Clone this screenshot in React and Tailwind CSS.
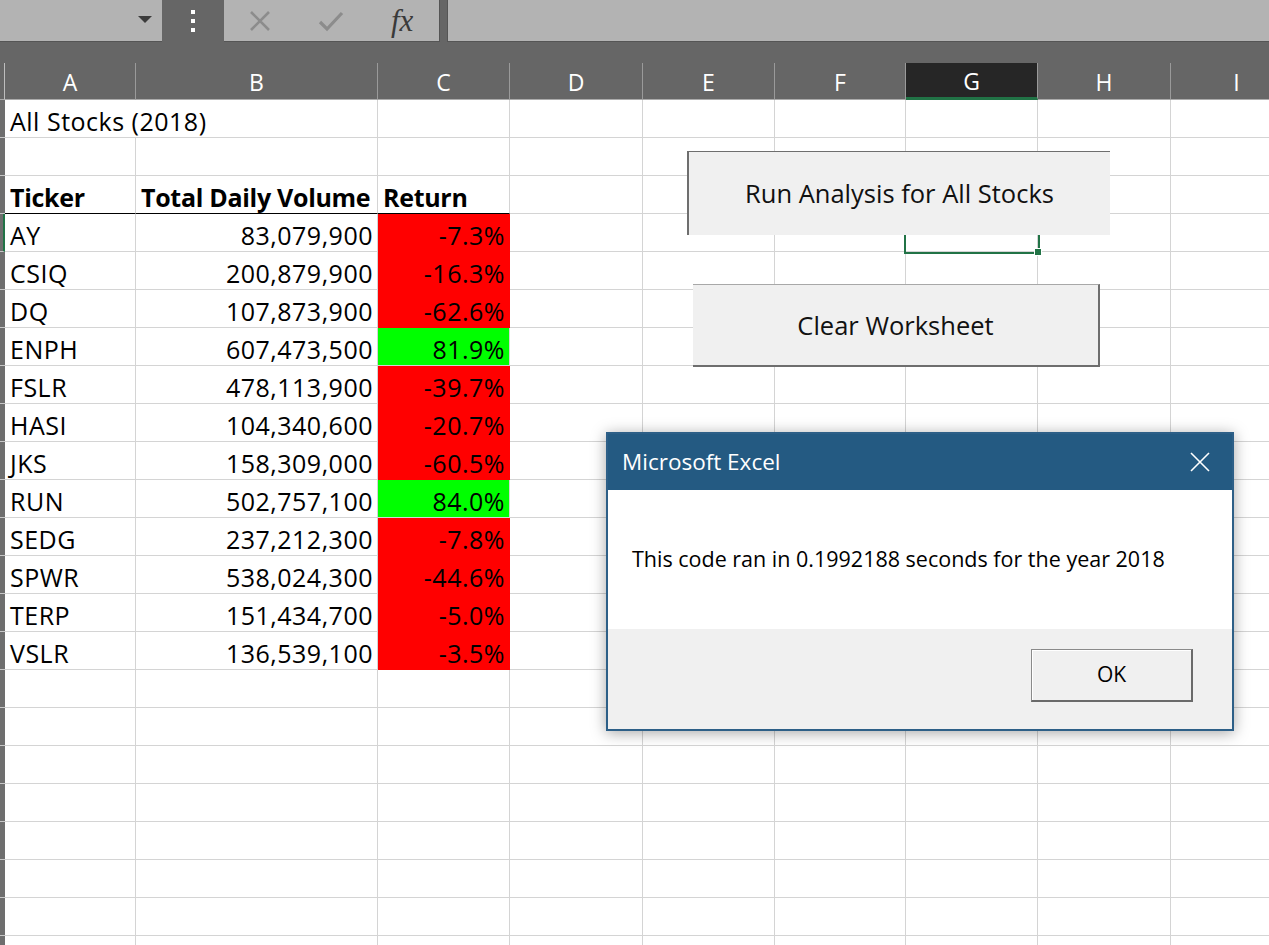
import React from "react";

const cols = [
  { key: "A", w: 131 },
  { key: "B", w: 242 },
  { key: "C", w: 132 },
  { key: "D", w: 133 },
  { key: "E", w: 132 },
  { key: "F", w: 131 },
  { key: "G", w: 132 },
  { key: "H", w: 133 },
  { key: "I", w: 132 },
];

const stocks = [
  ["AY", "83,079,900", "-7.3%", false],
  ["CSIQ", "200,879,900", "-16.3%", false],
  ["DQ", "107,873,900", "-62.6%", false],
  ["ENPH", "607,473,500", "81.9%", true],
  ["FSLR", "478,113,900", "-39.7%", false],
  ["HASI", "104,340,600", "-20.7%", false],
  ["JKS", "158,309,000", "-60.5%", false],
  ["RUN", "502,757,100", "84.0%", true],
  ["SEDG", "237,212,300", "-7.8%", false],
  ["SPWR", "538,024,300", "-44.6%", false],
  ["TERP", "151,434,700", "-5.0%", false],
  ["VSLR", "136,539,100", "-3.5%", false],
];

const cellFont = { fontFamily: "'Open Sans', 'Noto Sans', sans-serif" };

function Cell({ w, children, className = "", noRight }) {
  return (
    <div
      style={{ width: w }}
      className={`h-full shrink-0 flex items-end pb-[4px] leading-[24px] overflow-visible whitespace-nowrap border-b border-[#d4d4d4] ${
        noRight ? "" : "border-r"
      } ${className}`}
    >
      {children}
    </div>
  );
}

function Row({ children, active }) {
  return (
    <div className="flex h-[38px] text-[25px] text-black tracking-[0.5px]" style={cellFont}>
      <div
        className={`w-[5px] shrink-0 h-full bg-[#6e6e6e] border-b border-[#c8c8c8] ${
          active ? "border-r-2 border-r-[#217346]" : ""
        }`}
      />
      {children}
    </div>
  );
}

function EmptyCells({ from = 0 }) {
  return cols.slice(from).map((c) => <Cell key={c.key} w={c.w} />);
}

export default function App() {
  return (
    <div className="relative w-[1269px] h-[945px] overflow-hidden bg-white select-none">
      {/* toolbar */}
      <div className="flex h-[42px] bg-[#666666]">
        <div className="w-[162px] h-full bg-[#b3b3b3] border-b border-[#555] relative">
          <div className="absolute left-[138px] top-[16px] w-0 h-0 border-l-[7px] border-r-[7px] border-t-[7px] border-l-transparent border-r-transparent border-t-[#3c3c3c]" />
        </div>
        <div className="w-[62px] h-full flex flex-col items-center justify-center gap-[5px]">
          <div className="w-[4px] h-[4px] bg-white" />
          <div className="w-[4px] h-[4px] bg-white" />
          <div className="w-[4px] h-[4px] bg-white" />
        </div>
        <div className="w-[216px] h-full bg-[#b3b3b3] border-b border-r border-[#555] flex items-center">
          <svg width="24" height="24" viewBox="0 0 24 24" className="ml-[24px]">
            <path d="M3 3 L21 21 M21 3 L3 21" stroke="#8c8c8c" strokeWidth="2.6" />
          </svg>
          <svg width="28" height="24" viewBox="0 0 28 24" className="ml-[45px]">
            <path d="M3 13 L10 20 L25 4" stroke="#8c8c8c" strokeWidth="3.2" fill="none" />
          </svg>
          <span
            className="ml-[46px] text-[31px] italic text-[#3a3a3a] leading-none"
            style={{ fontFamily: "'Liberation Serif', serif" }}
          >
            fx
          </span>
        </div>
        <div className="w-[7px]" />
        <div className="flex-1 h-full bg-[#b3b3b3] border-b border-l border-[#555]" />
      </div>
      <div className="h-[21px] bg-[#666666]" />

      {/* column headers */}
      <div
        className="flex h-[37px] bg-[#666666] text-[23px] text-white"
        style={{ fontFamily: "'Open Sans', 'Noto Sans', sans-serif" }}
      >
        <div className="w-[5px] shrink-0 h-full border-r border-[#bdbdbd] border-b border-b-[#ababab]" />
        {cols.map((c) => (
          <div
            key={c.key}
            style={{ width: c.w }}
            className={`shrink-0 h-full flex items-center justify-center pt-[2px] border-r border-[#9a9a9a] ${
              c.key === "G"
                ? "bg-[#262626] border-b-[3px] border-b-[#217346]"
                : "border-b border-b-[#ababab]"
            }`}
          >
            {c.key}
          </div>
        ))}
      </div>

      {/* sheet */}
      <div>
        <Row>
          <Cell w={131} noRight>
            <span className="pl-[5px]">All Stocks (2018)</span>
          </Cell>
          <Cell w={242} />
          <EmptyCells from={2} />
        </Row>
        <Row>
          <EmptyCells />
        </Row>
        <Row>
          <Cell w={131} className="border-b-black font-bold tracking-[-0.3px]">
            <span className="pl-[5px]">Ticker</span>
          </Cell>
          <Cell w={242} className="border-b-black font-bold tracking-[-0.3px]">
            <span className="pl-[5px]">Total Daily Volume</span>
          </Cell>
          <Cell w={132} className="border-b-black font-bold tracking-[-0.3px]">
            <span className="pl-[5px]">Return</span>
          </Cell>
          <EmptyCells from={3} />
        </Row>
        {stocks.map(([t, v, r, up], i) => (
          <Row key={t} active={i === 0}>
            <Cell w={131}>
              <span className="pl-[5px]">{t}</span>
            </Cell>
            <Cell w={242} className="justify-end">
              <span className="pr-[4px]">{v}</span>
            </Cell>
            <Cell
              w={132}
              className={`justify-end ${up ? "bg-[#00ff00] border-[#00ff00]" : "bg-[#ff0000] border-[#ff0000]"}`}
            >
              <span className="pr-[4px]">{r}</span>
            </Cell>
            <EmptyCells from={3} />
          </Row>
        ))}
        {Array.from({ length: 8 }).map((_, i) => (
          <Row key={"e" + i}>
            <EmptyCells />
          </Row>
        ))}
      </div>

      {/* selected cell G5 */}
      <div className="absolute left-[904px] top-[212px] w-[136px] h-[42px] border-2 border-[#217346]" />
      <div className="absolute left-[1034px] top-[248px] w-[8px] h-[8px] bg-[#217346] border border-white" />

      {/* form buttons */}
      <div
        className="absolute left-[687px] top-[151px] w-[423px] h-[84px] bg-[#f0f0f0] border-t border-l-2 border-[#6e6e6e] flex items-center justify-center text-[25.5px] text-[#111]"
        style={cellFont}
      >
        Run Analysis for All Stocks
      </div>
      <div
        className="absolute left-[693px] top-[284px] w-[407px] h-[83px] bg-[#f0f0f0] border-t border-t-[#a8a8a8] border-r-2 border-b-2 border-[#6e6e6e] flex items-center justify-center text-[25.5px] text-[#111]"
        style={cellFont}
      >
        Clear Worksheet
      </div>

      {/* message box */}
      <div
        className="absolute left-[606px] top-[432px] w-[628px] h-[299px] border-2 border-[#2d5f87] bg-[#f0f0f0] flex flex-col shadow-[0_2px_14px_rgba(0,0,0,0.35)]"
        style={{ fontFamily: "'Open Sans', 'Noto Sans', sans-serif" }}
      >
        <div className="h-[56px] bg-[#245a82] flex items-center justify-between pl-[14px] pr-[22px]">
          <span className="text-white text-[22.5px]">Microsoft Excel</span>
          <svg width="20" height="20" viewBox="0 0 20 20">
            <path d="M1 1 L19 19 M19 1 L1 19" stroke="white" strokeWidth="1.6" />
          </svg>
        </div>
        <div className="h-[139px] bg-white flex items-center pl-[24px] text-[21.5px] text-black">
          This code ran in 0.1992188 seconds for the year 2018
        </div>
        <div className="flex-1 flex items-start justify-end pr-[39px] pt-[20px]">
          <div className="w-[162px] h-[53px] bg-[#f0f0f0] border border-[#8a8a8a] border-r-2 border-b-2 border-r-[#6a6a6a] border-b-[#6a6a6a] shadow-[inset_1px_1px_0_white] flex items-center justify-center text-[21px] text-black">
            OK
          </div>
        </div>
      </div>
    </div>
  );
}
